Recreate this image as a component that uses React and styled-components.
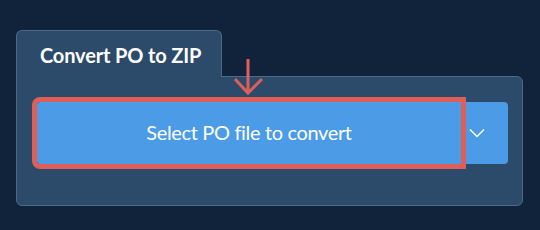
import React from 'react';
import styled, { createGlobalStyle } from 'styled-components';

const GlobalStyle = createGlobalStyle`
  html, body {
    margin: 0;
    padding: 0;
    background: #10233a;
  }
  body {
    font-family: Lato, "Open Sans", sans-serif;
  }
`;

const Page = styled.div`
  width: 540px;
  height: 230px;
  box-sizing: border-box;
  padding: 30px 17px 0 16px;
`;

const Card = styled.section`
  position: relative;
  display: flex;
  flex-direction: column;
  align-items: flex-start;
`;

const Tab = styled.h2`
  margin: 0;
  width: 206px;
  height: 47px;
  box-sizing: border-box;
  padding: 12px 0 0 23px;
  background: #2c4a6a;
  border: 1px solid #4b6a8c;
  border-bottom: none;
  border-radius: 6px 6px 0 0;
  color: #fff;
  font-size: 20px;
  line-height: 24px;
  font-weight: 700;
  letter-spacing: -0.15px;
  position: relative;
  z-index: 1;
  margin-bottom: -1px;
`;

const Body = styled.div`
  align-self: stretch;
  height: 130px;
  box-sizing: border-box;
  background: #2c4a6a;
  border: 1px solid #4b6a8c;
  border-radius: 0 6px 6px 6px;
  padding: 25px 14px 0 20px;
`;

const SplitButton = styled.div`
  display: flex;
  height: 62px;
`;

const MainButton = styled.button`
  flex: 1;
  border: none;
  margin: 0;
  background: #4c9be7;
  color: #fff;
  font-family: inherit;
  font-size: 20px;
  font-weight: 400;
  letter-spacing: -0.35px;
  border-radius: 3px 0 0 3px;
  outline: 5px solid #de5e5a;
  padding: 0 0 2px;
  position: relative;
  z-index: 1;
`;

const Toggle = styled.button`
  width: 47px;
  border: none;
  margin: 0;
  background: #4c9be7;
  border-radius: 0 4px 4px 0;
  display: flex;
  align-items: center;
  padding: 0 0 0 8px;
`;

const Pointer = styled.svg`
  position: absolute;
  left: 218px;
  top: 29px;
  z-index: 2;
`;

const Chevron = () => (
  <svg width="16" height="10" viewBox="0 0 16 10">
    <path d="M1 1.5 L8 8.5 L15 1.5" fill="none" stroke="#fff" strokeWidth="1.5" />
  </svg>
);

export default function App() {
  return (
    <>
      <GlobalStyle />
      <Page>
        <Card>
          <Tab>Convert PO to ZIP</Tab>
          <Body>
            <SplitButton>
              <MainButton>Select PO file to convert</MainButton>
              <Toggle>
                <Chevron />
              </Toggle>
            </SplitButton>
          </Body>
          <Pointer width="32" height="38" viewBox="0 0 32 38">
            <path d="M14 0 V34 M1 20 L14 34 L28 20" fill="none" stroke="#de5e5a" strokeWidth="3" />
          </Pointer>
        </Card>
      </Page>
    </>
  );
}
